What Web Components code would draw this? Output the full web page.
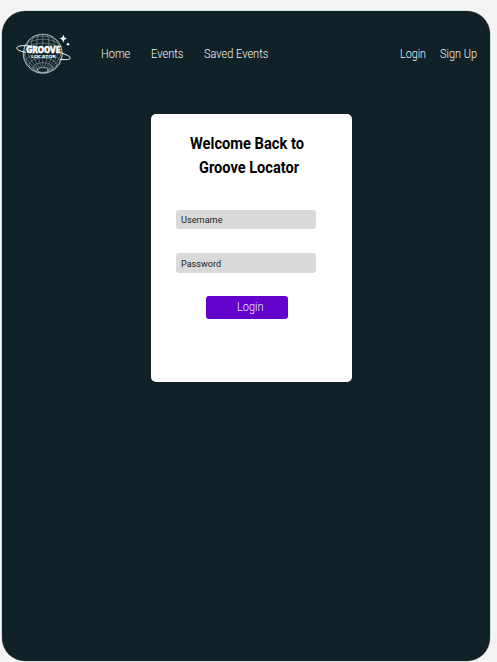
<!DOCTYPE html>
<html lang="en">
<head>
<meta charset="utf-8">
<title>Groove Locator</title>
<style>
html,body{margin:0;height:100%;background:#f4f4f4;overflow:hidden}
body{font-family:Roboto,"Noto Sans",sans-serif}
</style>
</head>
<body>
<login-page></login-page>
<script>
const define = (name, html, setup) => customElements.define(name, class extends HTMLElement {
  connectedCallback() {
    if (this.shadowRoot) return;
    const t = document.createElement('template');
    t.innerHTML = html;
    this.attachShadow({mode: 'open'}).append(t.content.cloneNode(true));
    if (setup) setup(this, this.shadowRoot);
  }
});

// A single line of text fitted to the width given in its "w" attribute.
define('fit-text', `<style>
:host{display:block;white-space:nowrap;flex:none}
span{display:inline-block;transform-origin:0 50%}
</style><span><slot></slot></span>`, (host, root) => {
  const w = +host.getAttribute('w'), s = root.querySelector('span');
  host.style.width = w + 'px';
  const fit = () => {
    s.style.transform = 'none';
    const n = s.getBoundingClientRect().width;
    if (n) s.style.transform = `scaleX(${w / n})`;
  };
  fit();
  document.fonts.ready.then(fit);
});

define('groove-logo', `<style>
:host{display:block;width:58px;height:44px;flex:none}
svg{display:block}
</style>
<svg width="58" height="44" viewBox="15 32 58 44" fill="none" stroke="#dfe8e9" stroke-width=".5">
<g id="globe" stroke-opacity=".72"><circle cx="42.8" cy="53.7" r="19.5" stroke-width=".8"/></g>
<ellipse cx="42.8" cy="70" rx="5.2" ry="2.4" fill="#102127" stroke-width=".7"/>
<path d="M26 52.3C19 51.2 16.3 49.5 17 47.6C18.2 44.5 31 45.3 45 48.6C59 51.8 71 55.7 70.3 58.1C69.9 59.7 66 60 60 59.2" stroke="#fff" stroke-width="1"/>
<path d="M63.3 34.2Q63.7 38.1 67.5 38.6Q63.7 39.1 63.3 43Q62.9 39.1 59.1 38.6Q62.9 38.1 63.3 34.2ZM68 42.3Q68.3 44 69.9 44.2Q68.3 44.5 68 46.1Q67.7 44.5 66.1 44.2Q67.7 44 68 42.3Z" fill="#fff" stroke="none"/>
<path d="M26 46.6H61V53.9H56.5V57.8H31V53.9H26Z" fill="#102127" fill-opacity=".65" stroke="none"/>
<g font-family="DejaVu Sans,sans-serif" font-weight="bold" text-anchor="middle" fill="#fff">
<text x="43.5" y="53.3" font-size="8.2" textLength="34.5" lengthAdjust="spacingAndGlyphs" stroke="#fff" stroke-width=".6">GROOVE</text>
<text x="43.6" y="57.6" font-size="4.2" textLength="25" lengthAdjust="spacingAndGlyphs" stroke="none">LOCATOR</text>
</g></svg>`, (host, root) => {
  // Meridians and parallels of a sphere tipped so that its south pole shows.
  const g = root.getElementById('globe'), R = 19.5, tilt = -.57, rad = Math.PI / 180;
  const line = (f, a, b) => {
    let d = '', pen = false;
    for (let t = a; t <= b; t += 5) {
      const [la, lo] = f(t).map(v => v * rad);
      const x = Math.cos(la) * Math.sin(lo), y = -Math.sin(la), z = Math.cos(la) * Math.cos(lo);
      const Y = y * Math.cos(tilt) - z * Math.sin(tilt), Z = z * Math.cos(tilt) + y * Math.sin(tilt);
      const sy = y * Math.cos(tilt) + z * Math.sin(tilt), sz = z * Math.cos(tilt) - y * Math.sin(tilt);
      if (sz < -.02) { pen = false; continue; }
      d += (pen ? 'L' : 'M') + (42.8 + R * x).toFixed(2) + ' ' + (53.7 + R * sy).toFixed(2);
      pen = true;
    }
    const p = document.createElementNS('http://www.w3.org/2000/svg', 'path');
    p.setAttribute('d', d);
    g.append(p);
  };
  for (let lo = 0; lo < 360; lo += 18) line(t => [t, lo], -75, 90);
  for (let la = -60; la < 90; la += 15) line(t => [la, t], 0, 360);
});

define('site-header', `<style>
:host{display:flex;padding:21px 12.8px 0 13.5px;height:44px;color:#f4f6f6;font-size:12.2px;font-weight:300;line-height:18px}
nav{display:flex;padding-top:13px}
.main{margin-left:28px;gap:20.6px}
.user{margin-left:auto;gap:14.5px}
</style>
<groove-logo></groove-logo>
<nav class="main"><fit-text w="29.3">Home</fit-text><fit-text w="32.5">Events</fit-text><fit-text w="64.3">Saved Events</fit-text></nav>
<nav class="user"><fit-text w="26">Login</fit-text><fit-text w="37">Sign Up</fit-text></nav>`);

define('form-field', `<style>
:host{display:flex;align-items:center;box-sizing:border-box;width:140px;height:19.5px;padding:1px 0 0 5px;border-radius:3px;background:#d9d9d9;color:#1c1c1c;font-size:9.5px;line-height:14px}
</style><slot></slot>`);

define('submit-button', `<style>
:host{display:flex;justify-content:center;box-sizing:border-box;width:82px;height:23px;padding:1.3px 0 0 6px;border-radius:3px;background:#6200cc;color:#f4eefc;font-size:12.2px;font-weight:300;line-height:18px}
</style><slot></slot>`);

define('login-card', `<style>
:host{display:block;box-sizing:border-box;width:201px;height:268px;padding:17.5px 0 0 25px;border-radius:5px;background:#fff;color:#000}
h1{margin:0;font-size:15.8px;line-height:23.7px;font-weight:700}
.a{margin-left:14px}.b{margin-left:22.5px}
form-field{margin-top:24px}
.first{margin-top:30.6px}
submit-button{margin:23.5px 0 0 30px}
</style>
<h1><fit-text class="a" w="114">Welcome Back to</fit-text><fit-text class="b" w="100">Groove Locator</fit-text></h1>
<form-field class="first"><fit-text w="41.5">Username</fit-text></form-field>
<form-field><fit-text w="40">Password</fit-text></form-field>
<submit-button><fit-text w="26.5">Login</fit-text></submit-button>`);

define('login-page', `<style>
:host{display:block;padding:11px 7px 1px 1.5px}
main{box-sizing:border-box;height:650px;border-radius:23px;background:#102127;box-shadow:0 0 0 .5px #b6c4c6}
login-card{margin:38.3px 0 0 149.5px}
</style><main><site-header></site-header><login-card></login-card></main>`);
</script>
</body>
</html>
